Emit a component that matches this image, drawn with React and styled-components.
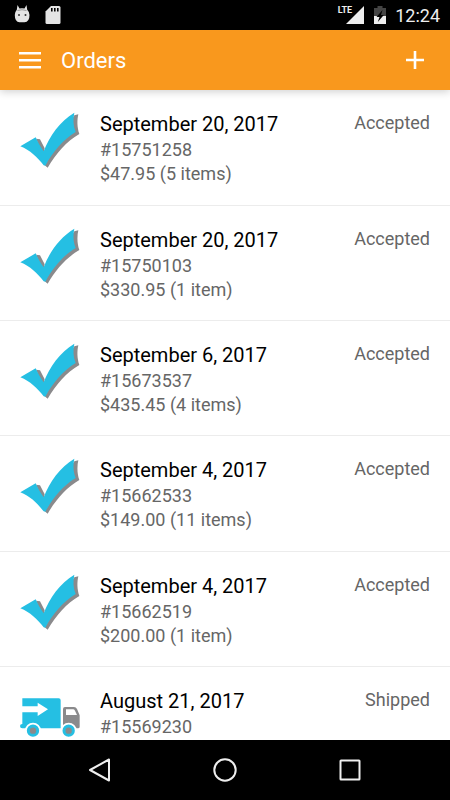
import styled, { createGlobalStyle } from "styled-components";

const orders = [
  { date: "September 20, 2017", number: "#15751258", total: "$47.95 (5 items)", status: "Accepted" },
  { date: "September 20, 2017", number: "#15750103", total: "$330.95 (1 item)", status: "Accepted" },
  { date: "September 6, 2017", number: "#15673537", total: "$435.45 (4 items)", status: "Accepted" },
  { date: "September 4, 2017", number: "#15662533", total: "$149.00 (11 items)", status: "Accepted" },
  { date: "September 4, 2017", number: "#15662519", total: "$200.00 (1 item)", status: "Accepted" },
  { date: "August 21, 2017", number: "#15569230", status: "Shipped" },
];

const CheckIcon = () => (
  <svg viewBox="30 30 180 180" aria-hidden="true">
    <path
      fill="#8a8a8c"
      d="M78 116 L90 118 L104 145 L101 156 L92 150 Z M193 46 L205 43 C201 60 201 82 208 102 C170 124 138 160 113 203 L104 196 Z"
    />
    <path
      fill="#25bfe3"
      d="M31 139 L77 112 C84 128 91 140 101 154 C118 108 150 64 193 38 C189 58 189 76 197 96 C160 118 128 156 106 197 L101 196 C82 172 60 150 31 139 Z"
    />
  </svg>
);

const TruckIcon = () => (
  <svg viewBox="30 21 180 180" aria-hidden="true">
    <path
      fill="#25bfe3"
      d="M37 55 H146 Q152 55 152 61 V145 H37 Q30 145 30 138 Q30 132 37 132 V97 H83 V108 L114 88 L83 68 V79 H37 Z"
    />
    <path
      fill="#8a8a8c"
      fillRule="evenodd"
      d="M159 145 V87 Q159 81 165 81 H192 Q198 81 201 87 L209 106 V140 Q209 145 204 145 Z M168 88 V105 H201 L195 92 Q193 88 189 88 Z"
    />
    <circle cx="69" cy="152" r="24" fill="#fff" />
    <circle cx="176" cy="152" r="24" fill="#fff" />
    <circle cx="69" cy="152" r="14" fill="#8a8a8c" stroke="#25bfe3" strokeWidth="9" />
    <circle cx="176" cy="152" r="14" fill="#8a8a8c" stroke="#25bfe3" strokeWidth="9" />
  </svg>
);

const App = () => {
  return (
    <>
      <GlobalStyle />
      <Screen>
        <StatusBar>
          <StatusGroup>
            <svg width="16" height="20" viewBox="0 0 16 20" aria-hidden="true">
              <path
                fill="#e4e4e4"
                d="M3.500 0 L5.500 3.600 Q8 2.800 10.500 3.600 L12.500 0 L13.200 4.800 Q15.500 7 15.500 10 Q15.500 17 10.500 17.200 H5.500 Q0.800 17 0.800 10 Q0.800 7 2.800 4.800 Z"
              />
              <path d="M3.500 5.500 Q8 4 12.500 5.500" stroke="#888" strokeWidth="0.800" fill="none" />
              <circle cx="5" cy="10" r="1" fill="#333" />
              <circle cx="11.500" cy="10" r="1" fill="#333" />
            </svg>
            <svg width="16" height="20" viewBox="0 0 16 20" aria-hidden="true">
              <path
                fill="#e4e4e4"
                d="M6 1 H14 Q15.500 1 15.500 2.500 V17.500 Q15.500 19 14 19 H2 Q0.500 19 0.500 17.500 V6.500 Z"
              />
              <path d="M6.800 3 V6.500 M9.800 3 V6.500 M12.800 3 V6.500" stroke="#000" strokeWidth="1.600" />
            </svg>
          </StatusGroup>
          <StatusGroup>
            <Signal>
              <span>LTE</span>
              <svg width="18" height="18" viewBox="0 0 18 18" aria-hidden="true">
                <path d="M18 0 V18 H0 Z" fill="#eee" />
              </svg>
            </Signal>
            <svg width="12" height="18" viewBox="0 0 12 18" aria-hidden="true">
              <path d="M3.500 0 H8.500 V2 H12 V18 H0 V2 H3.500 Z" fill="#444" />
              <path d="M0 10 H12 V18 H0 Z" fill="#eee" />
              <path d="M8.500 4 L2.500 11 H5.500 L3.800 16 L9.800 9 H7 Z" fill="#000" />
            </svg>
            <Clock>12:24</Clock>
          </StatusGroup>
        </StatusBar>

        <AppBar>
          <IconButton aria-label="Open menu">
            <svg width="24" height="24" viewBox="0 0 24 24" aria-hidden="true">
              <path d="M1 5.300 H23 M1 12.300 H23 M1 19.300 H23" stroke="#fff" strokeWidth="2.600" />
            </svg>
          </IconButton>
          <h1>Orders</h1>
          <IconButton aria-label="Add order">
            <svg width="24" height="24" viewBox="0 0 24 24" aria-hidden="true">
              <path d="M3 12 H21 M12 3 V21" stroke="#fff" strokeWidth="2.600" />
            </svg>
          </IconButton>
        </AppBar>

        <OrderList>
          {orders.map((order) => (
            <Order key={order.number}>
              {order.status === "Shipped" ? <TruckIcon /> : <CheckIcon />}
              <Details>
                <h2>{order.date}</h2>
                <p>{order.number}</p>
                {order.total && <p>{order.total}</p>}
              </Details>
              <Status>{order.status}</Status>
            </Order>
          ))}
        </OrderList>

        <NavBar>
          <IconButton aria-label="Back">
            <svg width="26" height="26" viewBox="0 0 26 26" aria-hidden="true">
              <path d="M22 2.500 V23.500 L3 13 Z" />
            </svg>
          </IconButton>
          <IconButton aria-label="Home">
            <svg width="26" height="26" viewBox="0 0 26 26" aria-hidden="true">
              <circle cx="13" cy="13" r="10.700" />
            </svg>
          </IconButton>
          <IconButton aria-label="Recent apps">
            <svg width="26" height="26" viewBox="0 0 26 26" aria-hidden="true">
              <rect x="3.500" y="3.500" width="19" height="19" rx="0.500" />
            </svg>
          </IconButton>
        </NavBar>
      </Screen>
    </>
  );
};

export default App;

const GlobalStyle = createGlobalStyle`
  * {
    box-sizing: border-box;
    margin: 0;
    padding: 0;
  }
  body {
    background-color: #fff;
    font-family: Roboto, "Liberation Sans", sans-serif;
  }
`;

const Screen = styled.div`
  display: flex;
  flex-direction: column;
  height: 100vh;
`;

const StatusBar = styled.div`
  display: flex;
  flex-shrink: 0;
  align-items: center;
  justify-content: space-between;
  height: 30px;
  padding: 0 10px 0 14px;
  background-color: #000;
`;

const StatusGroup = styled.div`
  display: flex;
  align-items: center;
  gap: 15px;
  svg {
    display: block;
  }
`;

const Signal = styled.div`
  display: flex;
  align-items: flex-start;
  margin-right: -5px;
  span {
    margin-right: -6px;
    color: #eee;
    font-size: 9px;
    font-weight: 700;
    line-height: 8px;
  }
`;

const Clock = styled.span`
  margin-left: -6px;
  color: #eee;
  font-size: 18px;
  font-weight: 400;
`;

const AppBar = styled.header`
  z-index: 1;
  display: flex;
  flex-shrink: 0;
  align-items: center;
  height: 60px;
  padding: 0 20px 0 15px;
  background-color: #f9981d;
  box-shadow: 0 2px 8px rgba(0, 0, 0, 0.18);
  h1 {
    flex: 1;
    padding: 2px 0 0 16px;
    color: #fff;
    font-size: 22px;
    font-weight: 400;
    line-height: 28px;
  }
`;

const IconButton = styled.button`
  display: flex;
  align-items: center;
  justify-content: center;
  width: 30px;
  height: 40px;
  border: none;
  background-color: transparent;
  cursor: pointer;
`;

const OrderList = styled.ul`
  display: grid;
  flex: 1;
  grid-auto-rows: 116px 115px 115px;
  min-height: 0;
  overflow-y: auto;
  scrollbar-width: none;
  list-style: none;
`;

const Order = styled.li`
  display: flex;
  align-items: flex-start;
  gap: 20px;
  padding: 20px 20px 0;
  border-bottom: 1px solid #ececec;
  svg {
    flex-shrink: 0;
    width: 60px;
    height: 60px;
  }
`;

const Details = styled.div`
  flex: 1;
  h2 {
    color: #000;
    font-size: 20px;
    font-weight: 400;
    line-height: 28px;
  }
  p {
    color: #666;
    font-size: 18px;
    line-height: 24px;
  }
`;

const Status = styled.span`
  color: #666;
  font-size: 18px;
  line-height: 26px;
`;

const NavBar = styled.nav`
  display: flex;
  flex-shrink: 0;
  align-items: center;
  justify-content: center;
  gap: 95px;
  height: 60px;
  background-color: #000;
  svg {
    fill: none;
    stroke: #eee;
    stroke-width: 2;
    stroke-linejoin: round;
  }
`;
